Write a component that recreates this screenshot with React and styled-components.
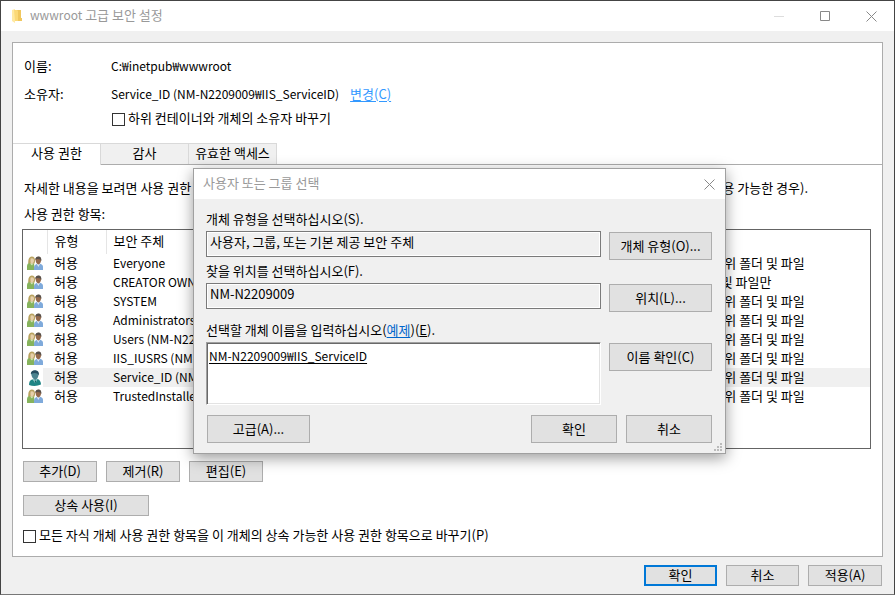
import React from 'react';
import styled, { createGlobalStyle, css } from 'styled-components';

const GlobalStyle = createGlobalStyle`
  * { box-sizing: border-box; }
  body {
    margin: 0;
    background: #f0f0f0;
    color: #000;
    font: 13px/20px "Noto Sans CJK KR", "Malgun Gothic", sans-serif;
  }
  button, input, textarea { font: inherit; color: inherit; margin: 0; }
`;

const Window = styled.main`
  display: flex;
  flex-direction: column;
  position: relative;
  min-height: 100vh;
  border: 1px solid #444;
  border-bottom-color: #777;
  background: #f0f0f0;
  overflow: hidden;
`;

const TitleBar = styled.header`
  display: flex;
  align-items: center;
  height: 30px;
  padding-left: ${(p) => p.$pad}px;
  background: #fff;
  color: #999;
`;

const Title = styled.h1`
  flex: 1;
  margin: 0;
  padding-bottom: 2px;
  font-size: 13px;
  font-weight: 400;
  line-height: 20px;
`;

const Latin = styled.span`
  font-size: 12px;
`;

const FolderIcon = styled.svg`
  margin-right: 7px;
`;

const CaptionButton = styled.button`
  display: grid;
  place-items: center;
  width: ${(p) => p.$width || 46}px;
  height: 30px;
  padding: 0;
  border: 0;
  background: none;
  color: ${(p) => (p.disabled ? '#ddd' : '#888')};
`;

const Panel = styled.section`
  display: flex;
  flex: 1;
  flex-direction: column;
  margin: 11px 11px 0;
  border: 1px solid #acacac;
  background: #fff;
`;

const Summary = styled.div`
  display: grid;
  grid-template-columns: 87px 1fr;
  row-gap: 8px;
  padding: 13px 11px 15px;
`;

const OwnerBlock = styled.div`
  display: grid;
  gap: 4px;
`;

const Link = styled.a`
  color: ${(p) => (p.$light ? '#3399ff' : '#0066cc')};
  margin-left: ${(p) => (p.$light ? 8 : 0)}px;
  text-underline-offset: 2px;
`;

const CheckLabel = styled.label`
  display: flex;
  align-items: center;
  gap: 3px;
`;

const Check = styled.input`
  appearance: none;
  width: 13px;
  height: 13px;
  && { margin: 2px 0 0 1px; }
  border: 1px solid #333;
  background: #fff;
`;

const TabList = styled.div`
  display: flex;
  height: 22px;
  border-bottom: 1px solid #acacac;
`;

const Tab = styled.button`
  width: ${(p) => p.$width}px;
  padding: 0 0 2px;
  border: 1px solid #d9d9d9;
  border-width: 1px 1px 0 0;
  background: #f0f0f0;
  line-height: 18px;
  white-space: nowrap;
  ${(p) =>
    p['aria-selected'] &&
    css`
      margin-bottom: -1px;
      padding-bottom: 3px;
      background: #fff;
    `}
`;

const TabPanel = styled.div`
  display: flex;
  flex-direction: column;
  padding: 13px 11px 11px 9px;
`;

const Hint = styled.p`
  display: flex;
  justify-content: space-between;
  margin: 0 63px 6px 2px;
  white-space: nowrap;
`;

const ListTitle = styled.div`
  margin: 0 2px 5px;
`;

const ListBox = styled.div`
  height: 220px;
  margin-bottom: 12px;
  border: 1px solid #646464;
  overflow: hidden;
`;

const Entries = styled.table`
  width: 100%;
  border-collapse: collapse;
  table-layout: fixed;
`;

const Col = styled.col`
  width: ${(p) => (p.$width ? `${p.$width}px` : 'auto')};
`;

const HeadCell = styled.th`
  height: 24px;
  padding: 0 0 2px 7px;
  border-right: ${(p) => (p.$ruled ? '1px solid #e5e5e5' : '0')};
  font-weight: 400;
  line-height: 20px;
  text-align: left;
`;

const Cell = styled.td`
  height: 19px;
  padding: 0 0 2px 7px;
  background: ${(p) => (p.$selected ? '#f0f0f0' : 'transparent')};
  font-size: ${(p) => (p.$latin ? 12 : 13)}px;
  line-height: 17px;
  white-space: nowrap;
  overflow: hidden;
`;

const IconCell = styled.td`
  height: 19px;
  padding: 0 0 0 4px;
  background: ${(p) => (p.$selected ? 'linear-gradient(90deg, #fff 20px, #f0f0f0 20px)' : 'none')};
  line-height: 0;
`;

const ButtonRow = styled.div`
  display: flex;
  gap: 9px;
  margin: ${(p) => p.$margin || 0};
  justify-content: ${(p) => (p.$end ? 'flex-end' : 'flex-start')};
`;

const Button = styled.button`
  width: ${(p) => p.$width || 74}px;
  height: ${(p) => (p.$tall ? 28 : 21)}px;
  padding: 0 0 2px;
  border: ${(p) => (p.$primary ? '2px solid #0078d7' : '1px solid #adadad')};
  background: #e1e1e1;
  line-height: ${(p) => (p.$primary ? 15 : 17)}px;
  white-space: nowrap;
`;

const Footer = styled.footer`
  padding: 8px 12px;
`;

const Dialog = styled.section`
  position: absolute;
  top: 167px;
  left: 192px;
  width: 533px;
  border: 1px solid #a0a0a0;
  background: #f0f0f0;
  box-shadow: 0 4px 14px rgba(0, 0, 0, 0.4);
`;

const DialogBody = styled.form`
  padding: 10px 13px 10px 12px;
`;

const FieldRow = styled.div`
  display: grid;
  grid-template-columns: 1fr 103px;
  align-items: start;
  gap: 8px;
  margin-bottom: ${(p) => p.$after}px;

  button { margin-top: 1px; }
`;

const FieldLabel = styled.div`
  display: block;
  margin-bottom: 2px;
`;

const TextField = styled.input`
  width: 100%;
  height: 26px;
  padding: 0 3px 6px;
  border: 1px solid #7a7a7a;
  outline: 1px solid #fff;
  outline-offset: -2px;
  background: #f0f0f0;
  line-height: 18px;
`;

const NamesField = styled.textarea`
  display: block;
  width: 100%;
  height: 63px;
  padding: 3px 2px;
  border: 1px solid;
  border-color: #a0a0a0 #fff #fff #a0a0a0;
  outline: 0;
  box-shadow: inset 1px 1px #696969, inset -1px -1px #e3e3e3;
  background: #fff;
  && { font-size: 12px; }
  resize: none;
  text-decoration: underline;
  text-underline-offset: 2px;
`;

const Spacer = styled.span`
  flex: 1;
`;

const Grip = styled.svg`
  position: absolute;
  right: 3px;
  bottom: 2px;
`;

const CloseIcon = () => (
  <svg width="11" height="11" viewBox="0 0 11 11" stroke="currentColor" fill="none" aria-hidden="true">
    <path d="M.5.5l10 10M10.5.5l-10 10" />
  </svg>
);

const GroupIcon = () => (
  <svg width="16" height="15" viewBox="0 0 16 15" aria-hidden="true">
    <path d="M0 14V10Q.4 7 3.3 6.6L7 7.4 8 14Z" fill="#86b35c" />
    <path d="M1.2 7Q1 .4 4.7.4T8 5.2L7.6 7.4 4.6 8Z" fill="#b8a260" />
    <path d="M3.6 2.5Q6.6 1.5 7 4T5.4 7.6 3.4 5Z" fill="#e6cfaa" />
    <path d="M3 7.6 5 9.6 6.2 7.6" fill="#d8e6bd" />
    <path d="M7 14Q6.6 9.3 9.6 8.1L13 7.8Q16 8.6 16 11V14Z" fill="#7faadb" />
    <path d="M9.5 7.5 11.3 11 13 7.7Z" fill="#dce9f7" />
    <path d="M8.4 3Q8.9.8 11.4.8 14.4 1 14.1 4.6 13.6 8.2 11.3 8.6 8.7 7.5 8.4 3Z" fill="#94694c" />
    <path d="M8.3 3.8Q8.3.5 11.4.4 14.9.6 14.3 5L13.3 3.6Q11 2.4 9.5 3.2Z" fill="#57504a" />
  </svg>
);

const UserIcon = () => (
  <svg width="16" height="16" viewBox="0 0 16 16" aria-hidden="true">
    <path d="M2 15Q2 10.6 5 9.6L10.6 9Q13.8 10 14 14.6 8 17 2 15Z" fill="#1f8585" />
    <path d="M5.5 9.2 8.4 13.4 10.6 9Z" fill="#9bd0cf" />
    <path d="M7.6 10.6 8.4 14 9.3 10.6Z" fill="#126067" />
    <path d="M4 3.2Q4.8.4 8.2.4 11.9.8 11.5 4.8 11 9 8.2 10 4.9 8.6 4 3.2Z" fill="#4b8390" />
    <path d="M3.8 4Q3.8.2 8.2.2 12.7.5 11.7 5.6L10.7 3.8Q7.6 2.4 5.2 3.6Z" fill="#264c60" />
  </svg>
);

const SCOPE_ALL = '이 폴더, 하위 폴더 및 파일';

const ENTRIES = [
  { name: 'Everyone', scope: SCOPE_ALL },
  { name: 'CREATOR OWNER', scope: '하위 폴더 및 파일만' },
  { name: 'SYSTEM', scope: SCOPE_ALL },
  { name: 'Administrators', scope: SCOPE_ALL },
  { name: 'Users (NM-N2209009)', scope: SCOPE_ALL },
  { name: 'IIS_IUSRS (NM-N2209009)', scope: SCOPE_ALL },
  { name: 'Service_ID (NM-N2209009)', scope: SCOPE_ALL, selected: true },
  { name: 'TrustedInstaller', scope: SCOPE_ALL },
];

function PermissionList() {
  return (
    <ListBox>
      <Entries aria-labelledby="entries-title">
        <colgroup>
          <Col $width={24} />
          <Col $width={59} />
          <Col $width={554} />
          <Col />
        </colgroup>
        <thead>
          <tr>
            <HeadCell $ruled />
            <HeadCell $ruled scope="col">유형</HeadCell>
            <HeadCell scope="col">보안 주체</HeadCell>
            <HeadCell />
          </tr>
        </thead>
        <tbody>
          {ENTRIES.map((entry) => (
            <tr key={entry.name}>
              <IconCell $selected={entry.selected}>{entry.selected ? <UserIcon /> : <GroupIcon />}</IconCell>
              <Cell $selected={entry.selected}>허용</Cell>
              <Cell $latin $selected={entry.selected}>{entry.name}</Cell>
              <Cell $selected={entry.selected}>{entry.scope}</Cell>
            </tr>
          ))}
        </tbody>
      </Entries>
    </ListBox>
  );
}

function SelectDialog() {
  return (
    <Dialog role="dialog" aria-labelledby="dialog-title">
      <TitleBar $pad={9}>
        <Title as="h2" id="dialog-title">사용자 또는 그룹 선택</Title>
        <CaptionButton $width={31} aria-label="닫기"><CloseIcon /></CaptionButton>
      </TitleBar>
      <DialogBody onSubmit={(e) => e.preventDefault()}>
        <FieldLabel as="label" htmlFor="object-type">개체 유형을 선택하십시오(S).</FieldLabel>
        <FieldRow $after={1}>
          <TextField id="object-type" readOnly value="사용자, 그룹, 또는 기본 제공 보안 주체" />
          <Button type="button" $width={103} $tall>개체 유형(O)...</Button>
        </FieldRow>
        <FieldLabel as="label" htmlFor="location">찾을 위치를 선택하십시오(F).</FieldLabel>
        <FieldRow $after={8}>
          <TextField id="location" readOnly value="NM-N2209009" />
          <Button type="button" $width={103} $tall>위치(L)...</Button>
        </FieldRow>
        <FieldLabel>
          <label htmlFor="names">선택할 개체 이름을 입력하십시오</label>(<Link href="#examples">예제</Link>)(<u>E</u>).
        </FieldLabel>
        <FieldRow $after={10}>
          <NamesField id="names" spellCheck={false} defaultValue="NM-N2209009₩IIS_ServiceID" />
          <Button type="button" $width={103} $tall>이름 확인(C)</Button>
        </FieldRow>
        <ButtonRow $margin="0 0 0 1px">
          <Button type="button" $width={103} $tall>고급(A)...</Button>
          <Spacer />
          <Button type="submit" $width={86} $tall>확인</Button>
          <Button type="button" $width={86} $tall>취소</Button>
        </ButtonRow>
      </DialogBody>
      <Grip width="8" height="8" viewBox="0 0 8 8" fill="#bbb" aria-hidden="true">
        <path d="M6 0h2v2H6zM3 3h2v2H3zM6 3h2v2H6zM0 6h2v2H0zM3 6h2v2H3zM6 6h2v2H6z" />
      </Grip>
    </Dialog>
  );
}

export default function App() {
  return (
    <>
      <GlobalStyle />
      <Window>
        <TitleBar $pad={11}>
          <FolderIcon width="11" height="14" viewBox="0 0 11 14" aria-hidden="true">
            <path d="M4 1h5v8h1v3H3z" fill="#f0c75e" />
            <path d="M0 1l3-1v14l-3-2z" fill="#ffe9a2" />
            <path d="M2 1h3l1 1v10H3z" fill="#fbd978" />
          </FolderIcon>
          <Title><Latin>wwwroot</Latin> 고급 보안 설정</Title>
          <CaptionButton disabled aria-label="최소화">
            <svg width="10" height="11" viewBox="0 0 10 11" aria-hidden="true"><path d="M0 5.5h10" stroke="currentColor" /></svg>
          </CaptionButton>
          <CaptionButton aria-label="최대화">
            <svg width="10" height="10" viewBox="0 0 10 10" aria-hidden="true"><path d="M.5.5h9v9h-9z" stroke="currentColor" fill="none" /></svg>
          </CaptionButton>
          <CaptionButton aria-label="닫기"><CloseIcon /></CaptionButton>
        </TitleBar>

        <Panel>
          <Summary>
            <span>이름:</span>
            <Latin>C:₩inetpub₩wwwroot</Latin>
            <span>소유자:</span>
            <OwnerBlock>
              <span>
                <Latin>Service_ID (NM-N2209009₩IIS_ServiceID)</Latin>{' '}
                <Link $light href="#change">변경(C)</Link>
              </span>
              <CheckLabel>
                <Check type="checkbox" />
                하위 컨테이너와 개체의 소유자 바꾸기
              </CheckLabel>
            </OwnerBlock>
          </Summary>

          <TabList role="tablist">
            <Tab role="tab" aria-selected $width={88}>사용 권한</Tab>
            <Tab role="tab" $width={88}>감사</Tab>
            <Tab role="tab" $width={88}>유효한 액세스</Tab>
          </TabList>

          <TabPanel role="tabpanel">
            <Hint>
              <span>자세한 내용을 보려면 사용 권한</span>
              <span>사용 가능한 경우).</span>
            </Hint>
            <ListTitle id="entries-title">사용 권한 항목:</ListTitle>
            <PermissionList />
            <ButtonRow $margin="0 1px 13px">
              <Button>추가(D)</Button>
              <Button>제거(R)</Button>
              <Button>편집(E)</Button>
            </ButtonRow>
            <ButtonRow $margin="0 1px 9px">
              <Button $width={126}>상속 사용(I)</Button>
            </ButtonRow>
            <CheckLabel>
              <Check type="checkbox" />
              모든 자식 개체 사용 권한 항목을 이 개체의 상속 가능한 사용 권한 항목으로 바꾸기(P)
            </CheckLabel>
          </TabPanel>
        </Panel>

        <Footer>
          <ButtonRow $end>
            <Button $width={73} $primary>확인</Button>
            <Button $width={73}>취소</Button>
            <Button>적용(A)</Button>
          </ButtonRow>
        </Footer>

        <SelectDialog />
      </Window>
    </>
  );
}
